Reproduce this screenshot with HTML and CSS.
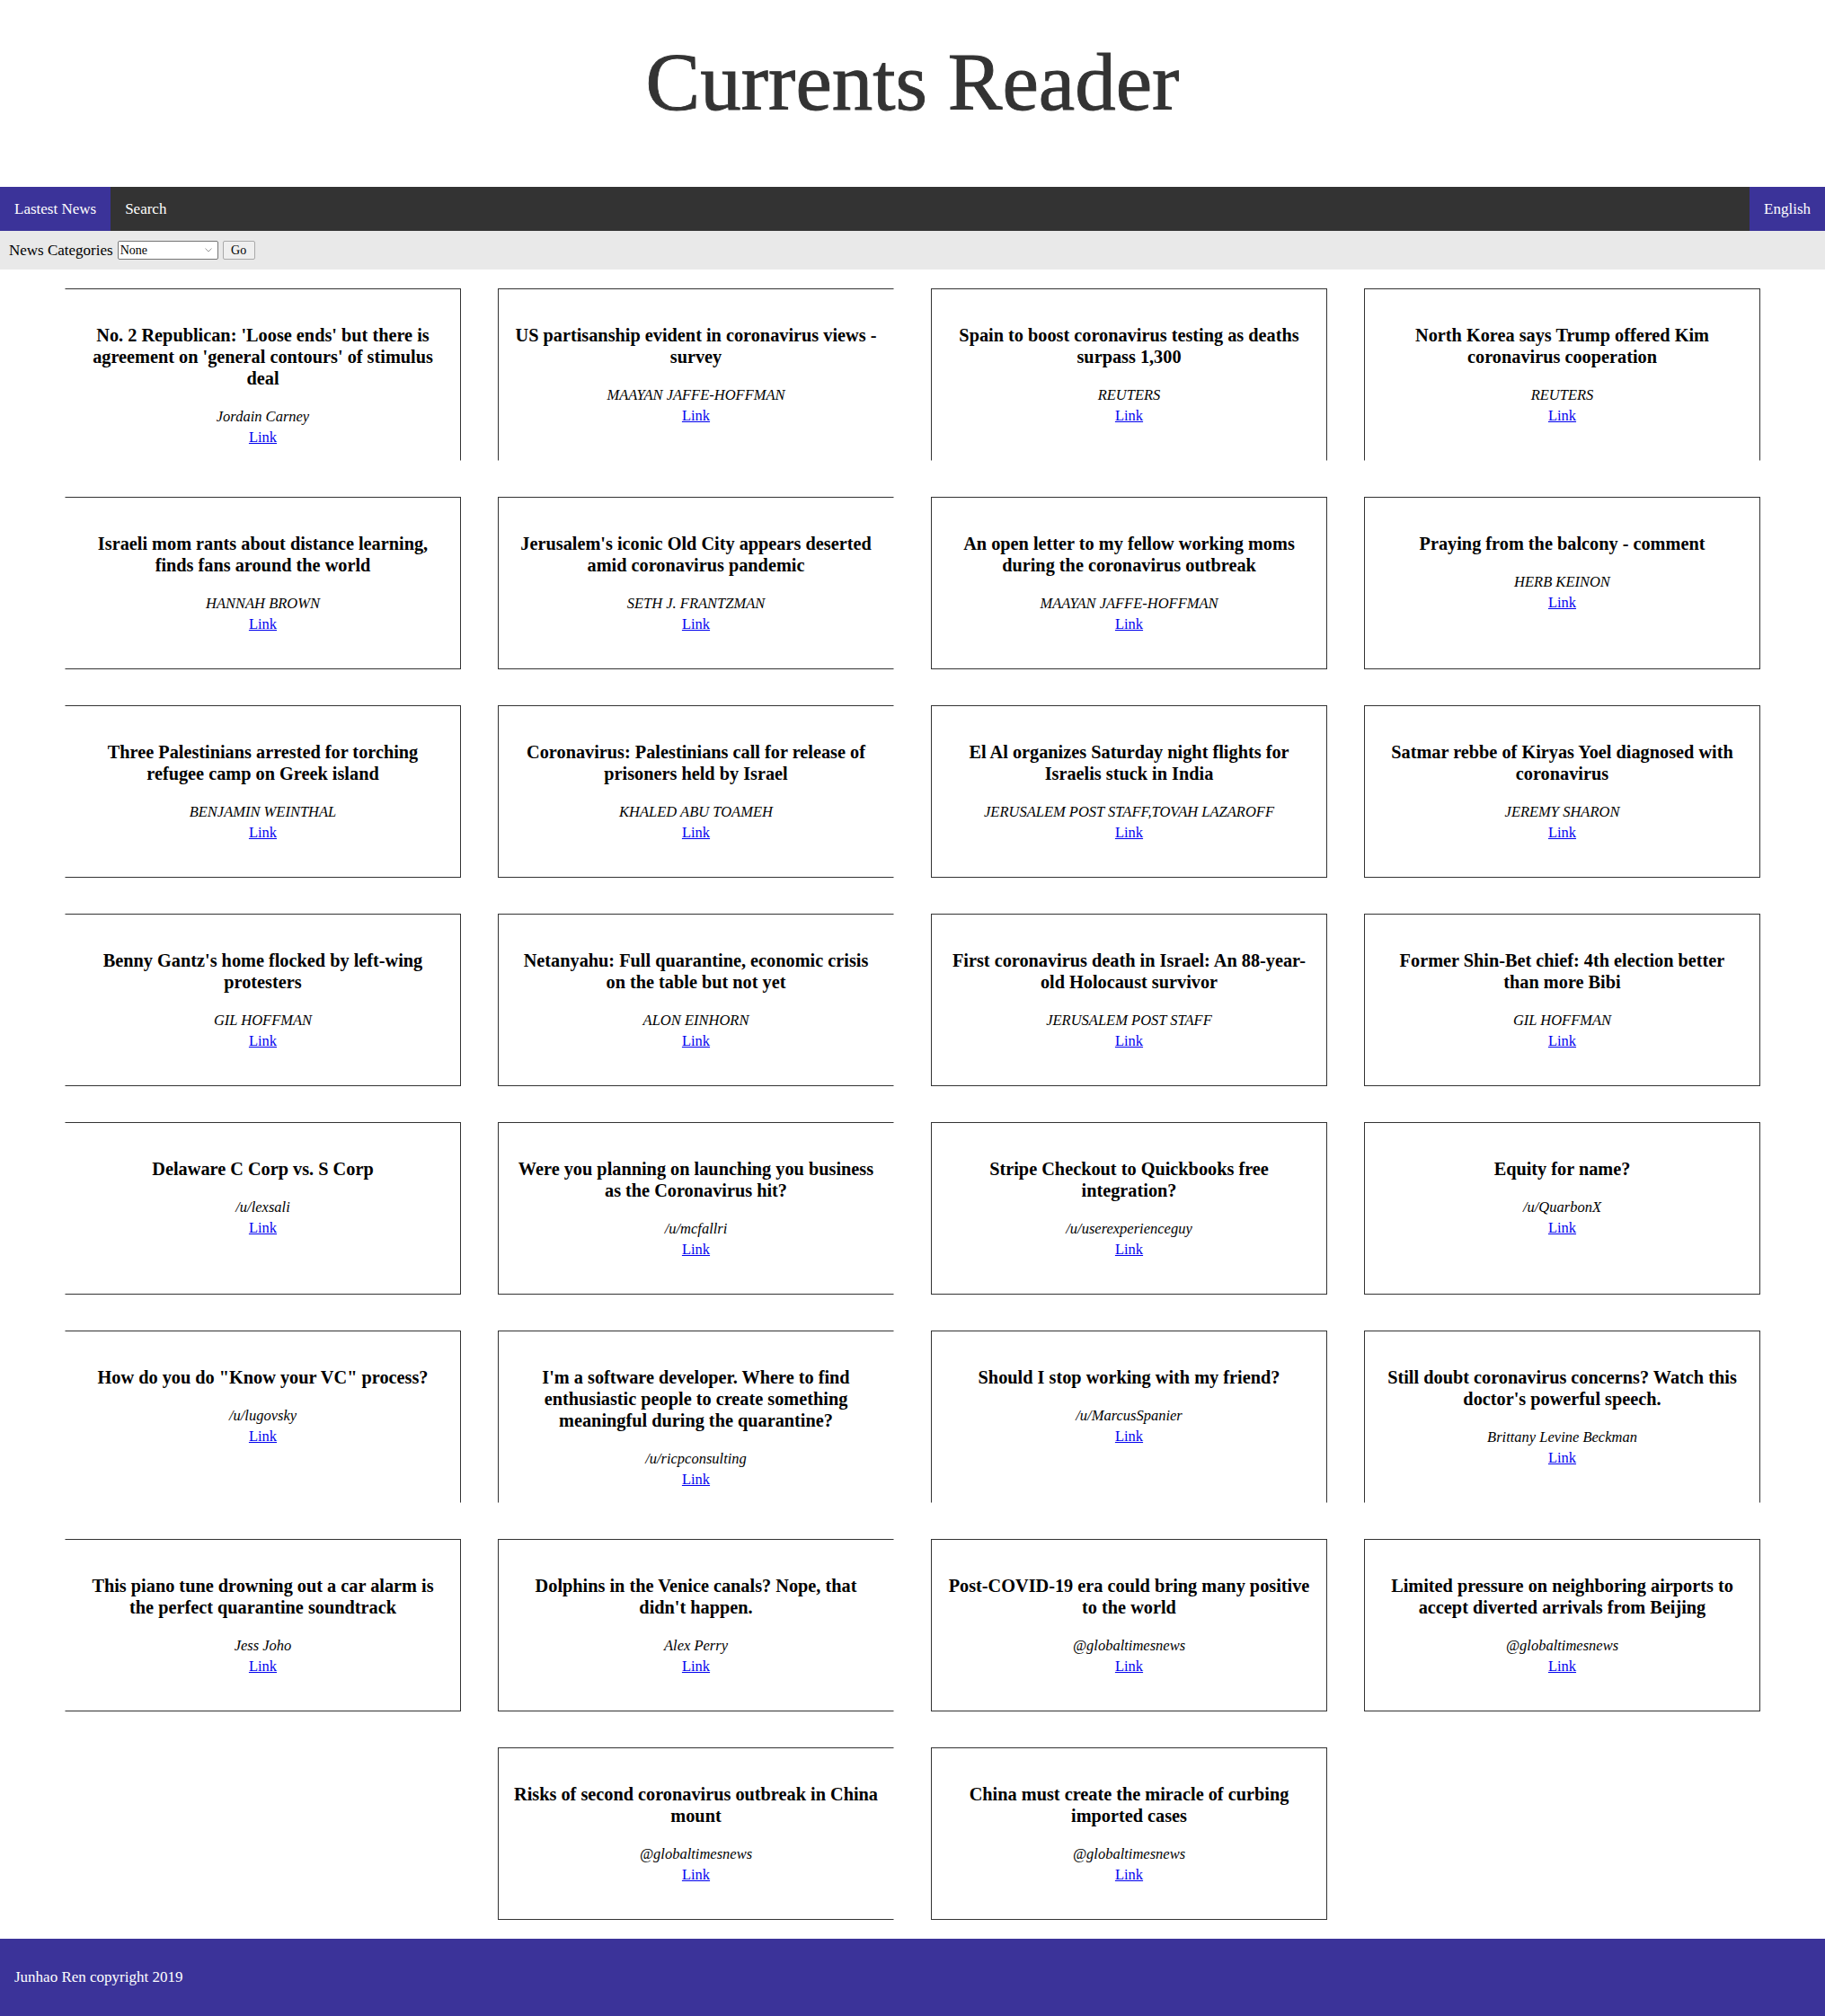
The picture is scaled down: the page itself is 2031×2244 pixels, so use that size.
FILE: index.html
```html
<!DOCTYPE html>
<html lang="en">
<head>
<meta charset="utf-8">
<title>Currents Reader</title>
<link rel="stylesheet" href="styles.css">
</head>
<body>
<header class="site-header">
  <h1 class="site-title">Currents Reader</h1>
</header>
<nav class="nav">
  <a class="nav-item nav-item--active" href="#">Lastest News</a>
  <a class="nav-item" href="#">Search</a>
  <a class="nav-item nav-item--active nav-item--end" href="#">English</a>
</nav>
<form class="filter-bar">
  <label class="filter-label" for="cat">News Categories</label>
  <span class="select-wrap">
    <select class="filter-select" id="cat"><option>None</option></select>
    <svg class="select-chevron" width="8" height="5" viewBox="0 0 8 5"><path d="M0.5 0.5 L4 4 L7.5 0.5" fill="none" stroke="#9a9a9a" stroke-width="1"/></svg>
  </span>
  <button class="filter-button" type="button">Go</button>
</form>
<main class="news-grid">
  <article class="card card--open-left card--open-bottom">
    <h3 class="card-title">No. 2 Republican: 'Loose ends' but there is<br>agreement on 'general contours' of stimulus<br>deal</h3>
    <p class="card-author">Jordain Carney</p>
    <p class="card-link"><a href="#">Link</a></p>
  </article>
  <article class="card card--open-right card--open-bottom">
    <h3 class="card-title">US partisanship evident in coronavirus views -<br>survey</h3>
    <p class="card-author">MAAYAN JAFFE-HOFFMAN</p>
    <p class="card-link"><a href="#">Link</a></p>
  </article>
  <article class="card card--open-bottom">
    <h3 class="card-title">Spain to boost coronavirus testing as deaths<br>surpass 1,300</h3>
    <p class="card-author">REUTERS</p>
    <p class="card-link"><a href="#">Link</a></p>
  </article>
  <article class="card card--open-bottom">
    <h3 class="card-title">North Korea says Trump offered Kim<br>coronavirus cooperation</h3>
    <p class="card-author">REUTERS</p>
    <p class="card-link"><a href="#">Link</a></p>
  </article>

  <article class="card card--open-left">
    <h3 class="card-title">Israeli mom rants about distance learning,<br>finds fans around the world</h3>
    <p class="card-author">HANNAH BROWN</p>
    <p class="card-link"><a href="#">Link</a></p>
  </article>
  <article class="card card--open-right">
    <h3 class="card-title">Jerusalem's iconic Old City appears deserted<br>amid coronavirus pandemic</h3>
    <p class="card-author">SETH J. FRANTZMAN</p>
    <p class="card-link"><a href="#">Link</a></p>
  </article>
  <article class="card">
    <h3 class="card-title">An open letter to my fellow working moms<br>during the coronavirus outbreak</h3>
    <p class="card-author">MAAYAN JAFFE-HOFFMAN</p>
    <p class="card-link"><a href="#">Link</a></p>
  </article>
  <article class="card">
    <h3 class="card-title">Praying from the balcony - comment</h3>
    <p class="card-author">HERB KEINON</p>
    <p class="card-link"><a href="#">Link</a></p>
  </article>

  <article class="card card--open-left">
    <h3 class="card-title">Three Palestinians arrested for torching<br>refugee camp on Greek island</h3>
    <p class="card-author">BENJAMIN WEINTHAL</p>
    <p class="card-link"><a href="#">Link</a></p>
  </article>
  <article class="card card--open-right">
    <h3 class="card-title">Coronavirus: Palestinians call for release of<br>prisoners held by Israel</h3>
    <p class="card-author">KHALED ABU TOAMEH</p>
    <p class="card-link"><a href="#">Link</a></p>
  </article>
  <article class="card">
    <h3 class="card-title">El Al organizes Saturday night flights for<br>Israelis stuck in India</h3>
    <p class="card-author">JERUSALEM POST STAFF,TOVAH LAZAROFF</p>
    <p class="card-link"><a href="#">Link</a></p>
  </article>
  <article class="card">
    <h3 class="card-title">Satmar rebbe of Kiryas Yoel diagnosed with<br>coronavirus</h3>
    <p class="card-author">JEREMY SHARON</p>
    <p class="card-link"><a href="#">Link</a></p>
  </article>

  <article class="card card--open-left">
    <h3 class="card-title">Benny Gantz's home flocked by left-wing<br>protesters</h3>
    <p class="card-author">GIL HOFFMAN</p>
    <p class="card-link"><a href="#">Link</a></p>
  </article>
  <article class="card card--open-right">
    <h3 class="card-title">Netanyahu: Full quarantine, economic crisis<br>on the table but not yet</h3>
    <p class="card-author">ALON EINHORN</p>
    <p class="card-link"><a href="#">Link</a></p>
  </article>
  <article class="card">
    <h3 class="card-title">First coronavirus death in Israel: An 88-year-<br>old Holocaust survivor</h3>
    <p class="card-author">JERUSALEM POST STAFF</p>
    <p class="card-link"><a href="#">Link</a></p>
  </article>
  <article class="card">
    <h3 class="card-title">Former Shin-Bet chief: 4th election better<br>than more Bibi</h3>
    <p class="card-author">GIL HOFFMAN</p>
    <p class="card-link"><a href="#">Link</a></p>
  </article>

  <article class="card card--open-left">
    <h3 class="card-title">Delaware C Corp vs. S Corp</h3>
    <p class="card-author">/u/lexsali</p>
    <p class="card-link"><a href="#">Link</a></p>
  </article>
  <article class="card card--open-right">
    <h3 class="card-title">Were you planning on launching you business<br>as the Coronavirus hit?</h3>
    <p class="card-author">/u/mcfallri</p>
    <p class="card-link"><a href="#">Link</a></p>
  </article>
  <article class="card">
    <h3 class="card-title">Stripe Checkout to Quickbooks free<br>integration?</h3>
    <p class="card-author">/u/userexperienceguy</p>
    <p class="card-link"><a href="#">Link</a></p>
  </article>
  <article class="card">
    <h3 class="card-title">Equity for name?</h3>
    <p class="card-author">/u/QuarbonX</p>
    <p class="card-link"><a href="#">Link</a></p>
  </article>

  <article class="card card--open-left card--open-bottom">
    <h3 class="card-title">How do you do "Know your VC" process?</h3>
    <p class="card-author">/u/lugovsky</p>
    <p class="card-link"><a href="#">Link</a></p>
  </article>
  <article class="card card--open-right card--open-bottom">
    <h3 class="card-title">I'm a software developer. Where to find<br>enthusiastic people to create something<br>meaningful during the quarantine?</h3>
    <p class="card-author">/u/ricpconsulting</p>
    <p class="card-link"><a href="#">Link</a></p>
  </article>
  <article class="card card--open-bottom">
    <h3 class="card-title">Should I stop working with my friend?</h3>
    <p class="card-author">/u/MarcusSpanier</p>
    <p class="card-link"><a href="#">Link</a></p>
  </article>
  <article class="card card--open-bottom">
    <h3 class="card-title">Still doubt coronavirus concerns? Watch this<br>doctor's powerful speech.</h3>
    <p class="card-author">Brittany Levine Beckman</p>
    <p class="card-link"><a href="#">Link</a></p>
  </article>

  <article class="card card--open-left">
    <h3 class="card-title">This piano tune drowning out a car alarm is<br>the perfect quarantine soundtrack</h3>
    <p class="card-author">Jess Joho</p>
    <p class="card-link"><a href="#">Link</a></p>
  </article>
  <article class="card card--open-right">
    <h3 class="card-title">Dolphins in the Venice canals? Nope, that<br>didn't happen.</h3>
    <p class="card-author">Alex Perry</p>
    <p class="card-link"><a href="#">Link</a></p>
  </article>
  <article class="card">
    <h3 class="card-title">Post-COVID-19 era could bring many positive<br>to the world</h3>
    <p class="card-author">@globaltimesnews</p>
    <p class="card-link"><a href="#">Link</a></p>
  </article>
  <article class="card">
    <h3 class="card-title">Limited pressure on neighboring airports to<br>accept diverted arrivals from Beijing</h3>
    <p class="card-author">@globaltimesnews</p>
    <p class="card-link"><a href="#">Link</a></p>
  </article>

  <article class="card card--open-right">
    <h3 class="card-title">Risks of second coronavirus outbreak in China<br>mount</h3>
    <p class="card-author">@globaltimesnews</p>
    <p class="card-link"><a href="#">Link</a></p>
  </article>
  <article class="card">
    <h3 class="card-title">China must create the miracle of curbing<br>imported cases</h3>
    <p class="card-author">@globaltimesnews</p>
    <p class="card-link"><a href="#">Link</a></p>
  </article>
</main>
<footer class="site-footer">Junhao Ren copyright 2019</footer>
</body>
</html>
```

FILE: styles.css
```css
body {
  margin: 0;
  font-family: "Liberation Serif", "Times New Roman", serif;
  color: #000;
  background: #fff;
}

.site-header {
  box-sizing: border-box;
  height: 208px;
  padding-top: 39px;
  text-align: center;
}

.site-title {
  margin: 0;
  font-size: 91px;
  font-weight: normal;
  line-height: normal;
  color: #333;
  -webkit-text-stroke: 0.9px #333;
}

.nav {
  display: flex;
  height: 49px;
  background: #333;
}

.nav-item {
  padding: 0 16px;
  font-size: 17px;
  line-height: 49px;
  color: #fff;
  text-decoration: none;
}

.nav-item--active {
  background: #3b3399;
}

.nav-item--end {
  margin-left: auto;
}

.filter-bar {
  display: flex;
  align-items: center;
  gap: 5px;
  height: 43px;
  margin: 0;
  padding-left: 10px;
  background: #e9e9e9;
  font-size: 17px;
}

.select-wrap {
  position: relative;
  display: flex;
}

.filter-select {
  box-sizing: border-box;
  width: 112px;
  height: 21px;
  margin: 0;
  padding: 0 2px;
  border: 1px solid #767676;
  border-radius: 2px;
  background: #fff;
  font-family: inherit;
  font-size: 14px;
  color: #000;
  -webkit-appearance: none;
  appearance: none;
}

.select-chevron {
  position: absolute;
  right: 7px;
  top: 8px;
  pointer-events: none;
}

.filter-button {
  box-sizing: border-box;
  width: 36px;
  height: 21px;
  margin: 0;
  padding: 0;
  border: 1px solid #a9a9a9;
  border-radius: 2px;
  background: #efefef;
  font-family: inherit;
  font-size: 14px;
  color: #000;
}

.news-grid {
  display: flex;
  flex-wrap: wrap;
  justify-content: center;
  gap: 40px 41px;
  padding: 21px 0;
}

.card {
  box-sizing: border-box;
  width: 441px;
  height: 192px;
  padding: 39px 10px 0;
  border: 1px solid #333;
  text-align: center;
}

.card--open-left {
  border-left-color: transparent;
}

.card--open-right {
  border-right-color: transparent;
}

.card--open-bottom {
  border-bottom-color: transparent;
}

.card-title {
  margin: 0 0 19px;
  font-size: 20.3px;
  font-weight: bold;
  line-height: 24px;
}

.card-author {
  margin: 0;
  font-size: 16.5px;
  font-style: italic;
  line-height: 23px;
}

.card-link {
  margin: 0;
  font-size: 16.5px;
  line-height: 23px;
}

.card-link a {
  color: #0000ee;
}

.site-footer {
  display: flex;
  align-items: center;
  height: 86px;
  padding-left: 16px;
  background: #3b3399;
  color: #fff;
  font-size: 17px;
}
```
